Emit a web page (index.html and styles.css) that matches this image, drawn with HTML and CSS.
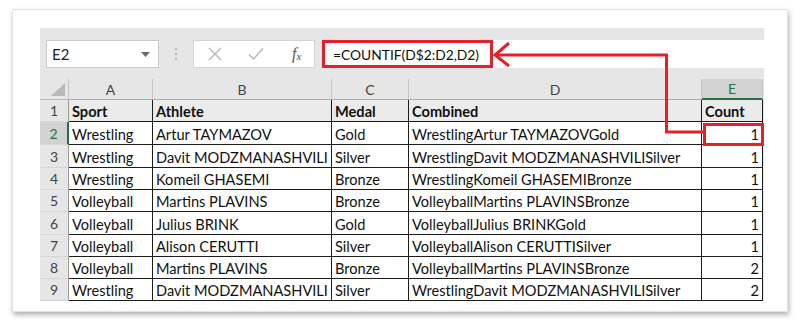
FILE: index.html
```html
<!DOCTYPE html>
<html>
<head>
<meta charset="utf-8">
<link rel="stylesheet" href="styles.css">
</head>
<body>
<div class="card">
  <div class="excel">
    <div class="fbar">
      <div class="namebox"><span>E2</span><svg class="dd" width="9" height="5" viewBox="0 0 9 5"><polygon points="0,0 9,0 4.5,5" fill="#6a6a6a"/></svg></div>
      <div class="grip"><i></i><i></i><i></i></div>
      <div class="btns">
        <svg width="14" height="14" viewBox="0 0 14 14"><path d="M1 1 L13 13 M13 1 L1 13" stroke="#b4b4b4" stroke-width="1.3" fill="none"/></svg>
        <svg width="16" height="14" viewBox="0 0 16 14"><path d="M1 7.5 L5.5 12 L15 1.5" stroke="#b4b4b4" stroke-width="1.3" fill="none"/></svg>
        <span class="fx">f<sub>x</sub></span>
      </div>
      <div class="formula"><span class="ftext">=COUNTIF(D$2:D2,D2)</span></div>
    </div>
    <div class="grid">
      <div class="corner"><svg width="14" height="13" viewBox="0 0 14 13"><polygon points="14,0 14,13 0,13" fill="#b9b9b9"/></svg></div>
      <div class="ch">A</div><div class="ch">B</div><div class="ch">C</div><div class="ch">D</div><div class="ch sel">E</div><div class="ch end"></div>

      <div class="rh">1</div><div class="c h">Sport</div><div class="c h">Athlete</div><div class="c h">Medal</div><div class="c h">Combined</div><div class="c h">Count</div><div class="end"></div>
      <div class="rh sel">2</div><div class="c first">Wrestling</div><div class="c">Artur TAYMAZOV</div><div class="c">Gold</div><div class="c">WrestlingArtur TAYMAZOVGold</div><div class="c n">1</div><div class="end"></div>
      <div class="rh">3</div><div class="c">Wrestling</div><div class="c">Davit MODZMANASHVILI</div><div class="c">Silver</div><div class="c">WrestlingDavit MODZMANASHVILISilver</div><div class="c n">1</div><div class="end"></div>
      <div class="rh">4</div><div class="c">Wrestling</div><div class="c">Komeil GHASEMI</div><div class="c">Bronze</div><div class="c">WrestlingKomeil GHASEMIBronze</div><div class="c n">1</div><div class="end"></div>
      <div class="rh">5</div><div class="c">Volleyball</div><div class="c">Martins PLAVINS</div><div class="c">Bronze</div><div class="c">VolleyballMartins PLAVINSBronze</div><div class="c n">1</div><div class="end"></div>
      <div class="rh">6</div><div class="c">Volleyball</div><div class="c">Julius BRINK</div><div class="c">Gold</div><div class="c">VolleyballJulius BRINKGold</div><div class="c n">1</div><div class="end"></div>
      <div class="rh">7</div><div class="c">Volleyball</div><div class="c">Alison CERUTTI</div><div class="c">Silver</div><div class="c">VolleyballAlison CERUTTISilver</div><div class="c n">1</div><div class="end"></div>
      <div class="rh">8</div><div class="c">Volleyball</div><div class="c">Martins PLAVINS</div><div class="c">Bronze</div><div class="c">VolleyballMartins PLAVINSBronze</div><div class="c n">2</div><div class="end"></div>
      <div class="rh">9</div><div class="c">Wrestling</div><div class="c">Davit MODZMANASHVILI</div><div class="c">Silver</div><div class="c">WrestlingDavit MODZMANASHVILISilver</div><div class="c n">2</div><div class="end"></div>
    </div>
  </div>
  <svg class="arrow" width="776" height="303" viewBox="0 0 776 303">
    <polyline points="692,123 654.5,123 654.5,46 484,46" fill="none" stroke="#e3212b" stroke-width="3"/>
    <polyline points="497,34 483,46 497,57" fill="none" stroke="#e3212b" stroke-width="3"/>
    <rect x="692.5" y="115.5" width="58" height="20" fill="none" stroke="#e3212b" stroke-width="3"/>
  </svg>
</div>
</body>
</html>
```

FILE: styles.css
```css
html, body {
  margin: 0;
  padding: 0;
  background: #ffffff;
}
body {
  width: 800px;
  height: 330px;
  overflow: hidden;
  font-family: Lato, "Liberation Sans", sans-serif;
}
.card {
  position: relative;
  box-sizing: border-box;
  margin: 9px 0 0 12px;
  width: 776px;
  height: 303px;
  padding: 19px 0 0 28px;
  background: #fff;
  border: 1px solid #e2e2e2;
  box-shadow: 1px 3px 5px rgba(0, 0, 0, 0.3);
}
.excel {
  width: 724px;
  height: 273px;
  margin: -1px 0 0 -1px;
  overflow: hidden;
  background: #e6e6e6;
  display: flex;
  flex-direction: column;
  padding-top: 12px;
  box-sizing: border-box;
}
.fbar {
  display: flex;
  height: 29px;
  align-items: stretch;
}
.namebox {
  box-sizing: border-box;
  width: 113px;
  margin-left: 6px;
  background: #fff;
  border: 1px solid #c9c9c9;
  display: flex;
  align-items: center;
  justify-content: space-between;
  padding: 0 8px 0 5px;
  font-size: 15px;
  color: #222;
}
.grip {
  width: 34px;
  display: flex;
  flex-direction: column;
  align-items: center;
  justify-content: center;
  gap: 3px;
}
.grip i {
  display: block;
  width: 2px;
  height: 2px;
  background: #b5b5b5;
}
.btns {
  box-sizing: border-box;
  width: 122px;
  background: #fff;
  border: 1px solid #d4d4d4;
  display: flex;
  align-items: center;
  padding: 0 10px 0 14px;
  gap: 26px;
}
.fx {
  font-family: "Liberation Serif", serif;
  font-style: italic;
  font-size: 16px;
  color: #555;
  margin-left: 2px;
}
.fx sub {
  font-size: 11px;
  vertical-align: -1px;
}
.formula {
  flex: 1;
  margin-left: 7px;
  background: #fff;
  display: flex;
}
.ftext {
  box-sizing: border-box;
  border: 3px solid #e3212b;
  width: 171px;
  padding: 0 0 0 8px;
  display: flex;
  align-items: center;
  font-size: 13.8px;
  color: #111;
  white-space: nowrap;
}
.grid {
  margin-top: 11px;
  display: grid;
  grid-template-columns: 29px 84px 179px 77px 293px 61px 1px;
  grid-template-rows: 21px 22px 23px 23px 22px 22px 23px 22px 22px 22px;
  background: #fff;
  flex: 1;
}
.corner {
  background: #e6e6e6;
  border-right: 1px solid #c6c6c6;
  border-bottom: 1px solid #bdbdbd;
  box-sizing: border-box;
  display: flex;
  align-items: flex-end;
  justify-content: flex-end;
  padding: 0 3px 3px 0;
}
.ch {
  box-sizing: border-box;
  background: #e6e6e6;
  border-right: 1px solid #c6c6c6;
  border-bottom: 1px solid #ababab;
  display: flex;
  align-items: center;
  justify-content: center;
  font-size: 14px;
  color: #444;
}
.ch.sel {
  background: #d2d2d2;
  color: #217346;
  border-bottom: 2px solid #217346;
}
.ch.end {
  border: 0;
}
.end {
  background: #e6e6e6;
}
.rh {
  box-sizing: border-box;
  background: #e6e6e6;
  border-right: 1px solid #9a9a9a;
  border-bottom: 1px solid #d6d6d6;
  display: flex;
  align-items: center;
  justify-content: center;
  font-size: 14px;
  color: #444;
}
.rh.sel {
  background: #d2d2d2;
  color: #217346;
  border-right: 2px solid #217346;
}
.c {
  box-sizing: border-box;
  border-right: 1px solid #1c1c1c;
  border-bottom: 1px solid #1c1c1c;
  padding: 2px 3px 0 3px;
  display: flex;
  align-items: center;
  font-size: 14.6px;
  color: #111;
  white-space: nowrap;
  overflow: hidden;
}
.c.h {
  background: #ebebeb;
  font-weight: bold;
}
.c.n {
  justify-content: flex-end;
}
.arrow {
  position: absolute;
  left: -1px;
  top: -1px;
  pointer-events: none;
}
```
